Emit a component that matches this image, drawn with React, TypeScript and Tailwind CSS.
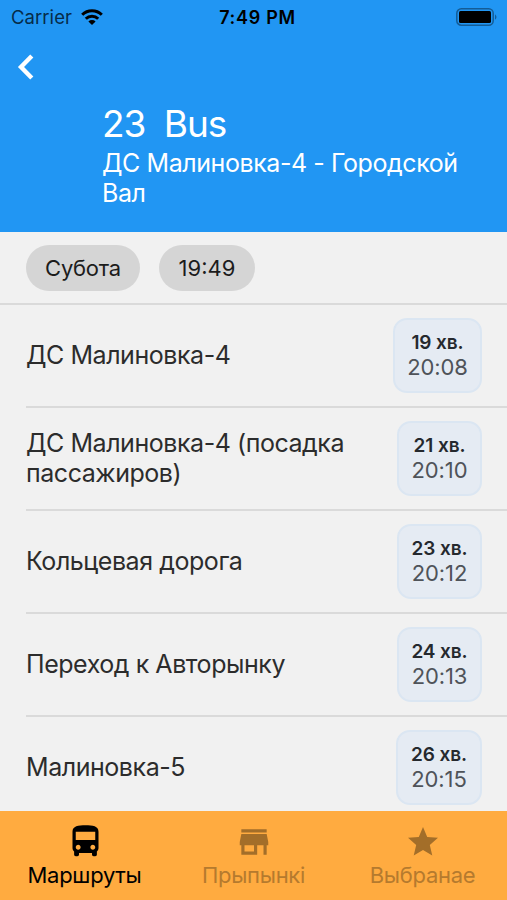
import { MdDirectionsBus, MdStar, MdStore } from "react-icons/md"

const stops = [
  { name: "ДС Малиновка-4", left: "19 хв.", time: "20:08", badge: "w-[89px]" },
  { name: "ДС Малиновка-4 (посадка пассажиров)", left: "21 хв.", time: "20:10", badge: "w-[85px]" },
  { name: "Кольцевая дорога", left: "23 хв.", time: "20:12", badge: "w-[85px]" },
  { name: "Переход к Авторынку", left: "24 хв.", time: "20:13", badge: "w-[85px]" },
  { name: "Малиновка-5", left: "26 хв.", time: "20:15", badge: "w-[86px]" },
]

const tabs = [
  { icon: MdDirectionsBus, label: "Маршруты", color: "text-black", iconColor: "text-black pl-[2px]", size: 39 },
  { icon: MdStore, label: "Прыпынкі", color: "text-[#b57a2e]", iconColor: "text-[#a36e29]", size: 38 },
  { icon: MdStar, label: "Выбранае", color: "text-[#b57a2e]", iconColor: "text-[#a36e29]", size: 36 },
]

function StatusBar() {
  return (
    <div className="grid h-[34px] grid-cols-3 items-center pl-[11px] pr-[9px] text-black">
      <div className="flex items-center gap-[9px]">
        <span className="pt-0.5 text-[18.5px] tracking-[0.05px] text-[#062b48]">Carrier</span>
        <svg width="22" height="16" viewBox="0 0 22 16" fill="none" stroke="currentColor" strokeWidth="3">
          <path d="M1.2 5.7a14 14 0 0 1 19.6 0" />
          <path d="M4.8 9.7a8.8 8.8 0 0 1 12.4 0" />
          <path d="M11 16 7.4 12.4a5.2 5.2 0 0 1 7.2 0z" fill="currentColor" stroke="none" />
        </svg>
      </div>
      <div className="pl-[6px] text-center text-[18px] font-semibold tracking-[0.7px]">7:49 PM</div>
      <svg className="justify-self-end" width="42" height="18" viewBox="0 0 42 18">
        <rect x="0.8" y="0.8" width="36.4" height="16.4" rx="4.5" fill="none" stroke="#145c96" strokeWidth="1.5" />
        <rect x="3" y="3" width="32" height="12" rx="1.5" fill="#000" />
        <path d="M39 6.2q3 2.8 0 5.6z" fill="#145c96" />
      </svg>
    </div>
  )
}

export default function App() {
  return (
    <div className="flex h-[900px] w-[507px] flex-col overflow-hidden bg-[#f1f1f1] font-['Inter','Noto_Sans',sans-serif]">
      <header className="h-[232px] shrink-0 bg-[#2196f3] text-white">
        <StatusBar />
        <button className="ml-[16px] mt-[19px] block h-[28px]">
          <svg width="18" height="28" viewBox="0 0 18 28" fill="none" stroke="currentColor" strokeWidth="4.4">
            <path d="M15.8 3 5 14l10.8 11" />
          </svg>
        </button>
        <div className="ml-[102px] mt-[21px]">
          <h1 className="whitespace-pre text-[37px] leading-[43px] font-normal tracking-[-1.1px]">23  Bus</h1>
          <p className="mt-[3px] w-[390px] text-[25px] leading-[30px] tracking-[-0.43px]">ДС Малиновка-4 - Городской Вал</p>
        </div>
      </header>

      <div className="flex h-[73px] shrink-0 items-center gap-[19px] border-b-2 border-[#dadada] pl-[26px] pt-px text-[22px] text-[#1c1c1c]">
        <button className="h-[46px] w-[114px] rounded-full bg-[#d5d5d5] tracking-[-0.25px]">Субота</button>
        <button className="h-[46px] w-[96px] rounded-full bg-[#d5d5d5]">19:49</button>
      </div>

      <ul className="min-h-0 flex-1 overflow-hidden pl-[26px]">
        {stops.map((stop) => (
          <li key={stop.time} className="flex h-[103px] items-center justify-between border-b-2 border-[#dadada] pb-px pr-[25px]">
            <span className="w-[340px] pb-px text-[25px] leading-[30px] tracking-[-0.45px] text-[#2c2c2c]">{stop.name}</span>
            <div className={`mt-px flex h-[75px] flex-col items-center justify-center rounded-[14px] border-2 border-[#dbe6f2] bg-[#e5ebf3] pb-0.5 ${stop.badge}`}>
              <span className="text-[19px] leading-[25px] font-semibold tracking-[-0.1px] text-[#25292e]">{stop.left}</span>
              <span className="text-[22px] leading-[24px] tracking-[-0.1px] text-[#4f5359]">{stop.time}</span>
            </div>
          </li>
        ))}
      </ul>

      <nav className="grid h-[89px] shrink-0 grid-cols-3 bg-[#ffab40]">
        {tabs.map((tab) => (
          <div key={tab.label} className={`flex flex-col items-center pt-[11px] ${tab.color}`}>
            <div className={`flex h-[39px] items-center ${tab.iconColor}`}>
              <tab.icon size={tab.size} />
            </div>
            <span className="pt-px text-[22px] leading-[27px] tracking-[-0.3px]">{tab.label}</span>
          </div>
        ))}
      </nav>
    </div>
  )
}
